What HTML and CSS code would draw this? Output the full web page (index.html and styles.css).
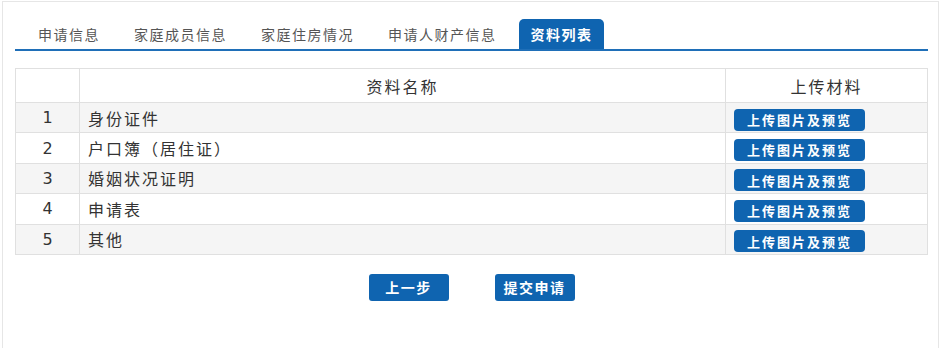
FILE: index.html
```html
<!DOCTYPE html>
<html lang="zh-CN">
<head>
<meta charset="utf-8">
<title>资料列表</title>
<link rel="stylesheet" href="styles.css">
</head>
<body>
<div class="panel">
  <div class="tabs">
    <div class="tab">申请信息</div>
    <div class="tab">家庭成员信息</div>
    <div class="tab">家庭住房情况</div>
    <div class="tab">申请人财产信息</div>
    <div class="tab active">资料列表</div>
  </div>
  <table class="files">
    <colgroup>
      <col class="c-no">
      <col class="c-name">
      <col class="c-up">
    </colgroup>
    <thead>
      <tr><th></th><th>资料名称</th><th>上传材料</th></tr>
    </thead>
    <tbody>
      <tr><td class="no">1</td><td class="name">身份证件</td><td class="up"><span class="btn-sm">上传图片及预览</span></td></tr>
      <tr><td class="no">2</td><td class="name">户口簿（居住证）</td><td class="up"><span class="btn-sm">上传图片及预览</span></td></tr>
      <tr><td class="no">3</td><td class="name">婚姻状况证明</td><td class="up"><span class="btn-sm">上传图片及预览</span></td></tr>
      <tr><td class="no">4</td><td class="name">申请表</td><td class="up"><span class="btn-sm">上传图片及预览</span></td></tr>
      <tr><td class="no">5</td><td class="name">其他</td><td class="up"><span class="btn-sm">上传图片及预览</span></td></tr>
    </tbody>
  </table>
  <div class="actions">
    <span class="btn">上一步</span>
    <span class="btn">提交申请</span>
  </div>
</div>
</body>
</html>
```

FILE: styles.css
```css
html, body {
  margin: 0;
  padding: 0;
  background: #fff;
}
body {
  font-family: "Noto Sans CJK SC", "Noto Sans", sans-serif;
  color: #333;
}
.panel {
  box-sizing: border-box;
  margin: 1px 4px 0 2px;
  height: 347px;
  border: 1px solid #e6e6e6;
  border-bottom: none;
  padding: 0 10px 0 12px;
}
.tabs {
  display: flex;
  gap: 11px;
  margin-top: 17px;
  padding-left: 11px;
  border-bottom: 2px solid #1f6fb8;
  height: 30px;
  align-items: flex-end;
}
.tab {
  height: 30px;
  line-height: 30px;
  padding: 0 11px 0 12px;
  font-size: 14px;
  letter-spacing: 1.5px;
  color: #555;
  white-space: nowrap;
}
.tab.active {
  background: #0f64b0;
  color: #fff;
  font-weight: bold;
  border-radius: 5px 5px 0 0;
}
.files {
  width: 100%;
  margin-top: 17px;
  border-collapse: collapse;
  border: 1px solid #dedede;
  table-layout: fixed;
}
.c-no { width: 64px; }
.c-up { width: 202px; }
.files th, .files td {
  border: 1px solid #e0e0e0;
  font-size: 16px;
  letter-spacing: 2px;
  font-weight: normal;
  padding: 0;
}
.files th {
  height: 33px;
  text-align: center;
  color: #333;
}
.files td {
  height: 29.4px;
}
.files tbody tr:nth-child(odd) td {
  background: #f5f5f5;
}
.files td.no {
  text-align: center;
  font-family: "DejaVu Sans", "Noto Sans CJK SC", sans-serif;
  font-size: 16px;
  letter-spacing: 0;
}
.files td.name {
  padding-left: 8px;
}
.files td.up {
  padding-left: 8px;
}
.btn-sm {
  display: inline-flex;
  align-items: center;
  justify-content: center;
  width: 131px;
  height: 22px;
  background: #0f64b0;
  color: #fff;
  border-radius: 4px;
  font-size: 13px;
  font-weight: bold;
  letter-spacing: 2px;
  vertical-align: middle;
}
.actions {
  display: flex;
  justify-content: center;
  gap: 46px;
  margin-top: 19px;
}
.btn {
  display: inline-flex;
  align-items: center;
  justify-content: center;
  width: 80px;
  height: 27px;
  background: #0f64b0;
  color: #fff;
  border-radius: 3px;
  font-size: 14px;
  font-weight: bold;
  letter-spacing: 1.5px;
}
```
